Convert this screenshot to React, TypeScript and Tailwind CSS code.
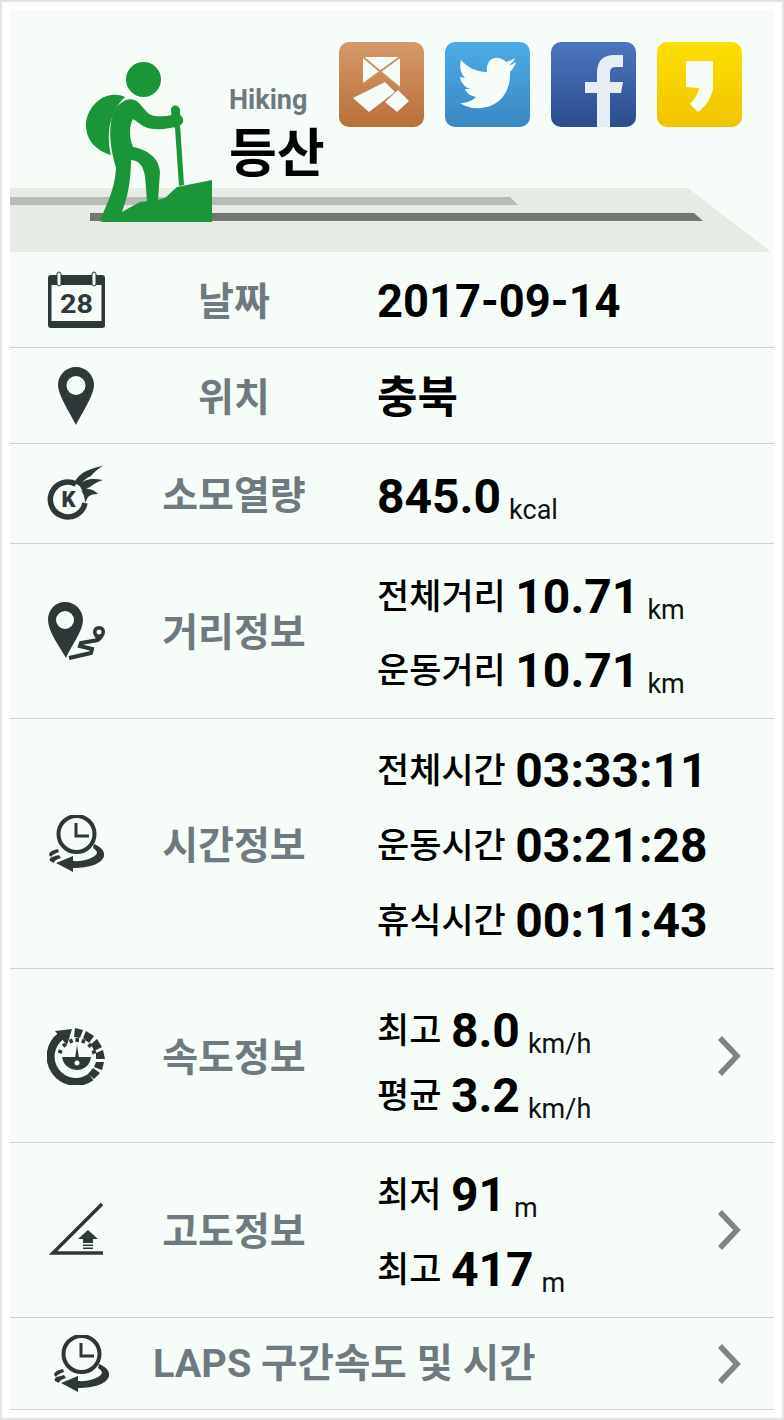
import type { ReactNode } from "react";

const ink = "#2f3838";
const paper = "#f6fcf7";
const green = "#1a9639";

function Hiker() {
  return (
    <svg viewBox="85 62 128 161" className="absolute left-[75px] top-[52px] h-[161px] w-[128px]">
      <circle cx="143.5" cy="79.5" r="17.5" fill={green} />
      <path d="M125 97 C110 90 90 100 86 122 C85 138 94 150 111 155 C107 138 107 114 125 97Z" fill={green} />
      <path
        d="M126 100 C131 98 136 100 139 103 L146 111 C150 116 156 118 172 115 L177 113 C181 114 184 119 183 122 C181 126 178 127 170 128 C160 130 150 130 143 126 L133 119 C129 126 129 138 133 147 C148 150 159 158 160 172 L158 201 L147 201 L145 176 C143 166 140 161 131 160 C131 178 128 198 121 214 L100 221 C106 205 115 190 116 168 C111 150 109 138 111 122 C112 112 117 104 126 100Z"
        fill={green}
      />
      <path d="M171 110 C171 104 179 104 180 110 L180 124 L184 185 L179 186 L175 128 L172 124Z" fill={green} />
      <path d="M212 180 L212 222 L100 222 L120 213 L140 202 L157 200 L165 198 L177 187Z" fill={green} />
    </svg>
  );
}

function Band() {
  return (
    <svg viewBox="10 188 764 64" className="absolute bottom-0 left-0 h-[64px] w-[764px]">
      <path d="M10 188 L688 188 L771 252 L10 252Z" fill="#e6ebe6" />
      <path d="M10 197 L510 197 L518 205 L10 205Z" fill="#b7bcb7" />
      <path d="M90 213 L694 213 L703 221 L90 221Z" fill="#727772" />
    </svg>
  );
}

function SocialTile({ className, children }: { className: string; children: ReactNode }) {
  return <div className={`h-[85px] w-[85px] overflow-hidden rounded-[10px] ${className}`}>{children}</div>;
}

function SocialIcons() {
  return (
    <div className="flex gap-[21px]">
      <SocialTile className="bg-linear-to-b from-[#d59a6a] to-[#b86f38]">
        <svg viewBox="0 0 85 85" className="h-full w-full">
          <path d="M24 15 L61 15 L61 45 L41 30 L24 42Z" fill={paper} />
          <path d="M24 15 L61 46 M61 15 L24 42" stroke="#cd9263" strokeWidth="2" fill="none" />
          <path d="M14 56 L46 40 L56 50 L30 70Z" fill={paper} />
          <path d="M46 60 L59 48 L70 59 L58 70Z" fill={paper} />
        </svg>
      </SocialTile>
      <SocialTile className="bg-linear-to-b from-[#4dabe6] to-[#3a88c2]">
        <svg viewBox="0 0 85 85" className="h-full w-full">
          <path
            d="M71 20 C68 22 66 23 64 23 C67 21 69 19 70 16 C67 18 64 19 61 20 C58 17 54 15 50 16 C44 17 41 23 42 30 C31 30 22 25 16 18 C14 26 16 32 20 36 C18 36 17 35 15 35 C16 41 20 45 25 47 C23 47 21 47 20 47 C22 52 26 54 31 55 C27 59 21 61 15 61 C21 65 28 67 36 66 C54 65 66 50 65 30 C67 28 70 24 71 20Z"
            fill={paper}
          />
        </svg>
      </SocialTile>
      <SocialTile className="bg-linear-to-b from-[#4d76bf] to-[#2b4c8c]">
        <svg viewBox="0 0 85 85" className="h-full w-full">
          <path
            d="M46 85 L46 51 L34 51 L34 40 L46 40 L46 31 C46 19 52 13 63 13 L72 13 L72 25 L66 25 C61 25 59 26 59 31 L59 40 L72 40 L70 51 L59 51 L59 85Z"
            fill="#e6edf5"
          />
        </svg>
      </SocialTile>
      <SocialTile className="bg-linear-to-b from-[#fce000] to-[#f0c400]">
        <svg viewBox="0 0 85 85" className="h-full w-full">
          <path d="M29 19 L56 19 L56 47 C54 57 48 65 41 70 L33 62 C37 58 41 52 42 46 L29 45Z" fill={paper} />
        </svg>
      </SocialTile>
    </div>
  );
}

function CalendarIcon() {
  return (
    <svg viewBox="0 0 58 58" className="h-[58px] w-[58px]">
      <rect x="1" y="4" width="57" height="53" rx="3" fill={ink} />
      <rect x="4.5" y="14" width="50" height="36" fill={paper} />
      <rect x="10" y="1" width="4" height="14" rx="2" fill={paper} stroke={ink} strokeWidth="1" />
      <rect x="45" y="1" width="4" height="14" rx="2" fill={paper} stroke={ink} strokeWidth="1" />
      <text
        x="13"
        y="42"
        textLength="33"
        lengthAdjust="spacingAndGlyphs"
        fontSize="25"
        fontWeight="700"
        fill={ink}
        fontFamily="Roboto, sans-serif"
      >
        28
      </text>
    </svg>
  );
}

function PinIcon() {
  return (
    <svg viewBox="0 0 36 58" className="h-[58px] w-[36px]">
      <path
        fillRule="evenodd"
        d="M18 0 C8 0 0 8 0 18 C0 28 12 46 18 58 C24 46 36 28 36 18 C36 8 28 0 18 0Z M18 9 A9.5 9.5 0 1 1 18 28 A9.5 9.5 0 1 1 18 9Z"
        fill={ink}
      />
    </svg>
  );
}

function KcalIcon() {
  return (
    <svg viewBox="0 0 58 58" className="h-[58px] w-[58px]">
      <path d="M29 19 A17.5 17.5 0 1 0 38 38" stroke={ink} strokeWidth="5.5" fill="none" />
      <text x="21.5" y="42" textAnchor="middle" fontSize="22" fontWeight="900" fill={ink} fontFamily="Roboto, sans-serif">
        K
      </text>
      <path d="M27 18 C33 6 44 4 56 0.5 C50 5 46 8 44 11 C40 13 36 15 33 21Z" fill={ink} />
      <path d="M32 20 C40 12 48 14 56 15 C50 17 46 19 43 22 C40 23 38 25 37 28Z" fill={ink} />
      <path d="M35 26 C42 22 47 25 51 29 C46 29 43 30 41 32 C40 34 39 36 38 38 C38 33 37 29 33 24Z" fill={ink} />
    </svg>
  );
}

function RouteIcon() {
  return (
    <svg viewBox="0 0 58 58" className="h-[58px] w-[58px]">
      <path
        fillRule="evenodd"
        d="M18 0 C8 0 1 8 1 18 C1 29 12 44 19 56 C24 44 36 29 36 18 C36 8 28 0 18 0Z M18 9 A9 9 0 1 1 18 27 A9 9 0 1 1 18 9Z"
        fill={ink}
      />
      <path d="M22 56 L44 51 L45 47 L33 44 L34 41 L51 38" stroke={ink} strokeWidth="4" fill="none" />
      <path
        fillRule="evenodd"
        d="M52 24 C48 24 46 27 46 30 C46 33 49 37 52 40 C55 37 58 33 58 30 C58 27 56 24 52 24Z M52 27.5 A2.5 2.5 0 1 1 52 32.5 A2.5 2.5 0 1 1 52 27.5Z"
        fill={ink}
      />
    </svg>
  );
}

function ClockIcon() {
  return (
    <svg viewBox="0 0 58 58" className="h-[58px] w-[58px]">
      <circle cx="29.5" cy="19" r="18" stroke={ink} strokeWidth="4" fill={paper} />
      <path d="M29 8 L29 21 L42 21" stroke={ink} strokeWidth="3" fill="none" />
      <path
        d="M47 29 C52 31 58 35 57 41 C55 49 42 53 26 53 L26 57 L9 48 L26 41 L26 46 C36 47 48 43 50 38 C50 36 48 34 46 33Z"
        fill={ink}
      />
      <path d="M2 40 C2 37 6 35 11 34 L12 37 C8 38 5 40 4 42Z M3 46 C2 44 3 43 5 42 L12 40 L14 43 C10 44 7 46 7 48Z" fill={ink} />
    </svg>
  );
}

function SpeedIcon() {
  const dots = [200, 225, 250, 270, 290, 315, 340];
  return (
    <svg viewBox="0 0 58 58" className="h-[58px] w-[58px]">
      <path d="M44 50 A25 25 0 1 1 14 9" stroke={ink} strokeWidth="8" fill="none" />
      <path d="M8 4 L25 2 L20 18Z" fill={ink} />
      <path
        d="M28 1 L36 3 L33 11 L27 10Z M39 4 L47 9 L42 16 L36 11Z M50 12 L55 20 L47 24 L44 17Z M56 23 L58 32 L49 32 L49 26Z M57 35 L55 43 L47 40 L49 35Z M53 46 L47 52 L41 47 L46 41Z"
        fill={ink}
      />
      <path d="M15 30 L44 30 C43 38 37 43 30 43 C23 43 16 38 15 30Z" fill={ink} />
      <path d="M30 18 L32 31 L28 31Z" fill={ink} />
      <circle cx="30" cy="36" r="2.5" fill={paper} />
      {dots.map((a) => (
        <rect key={a} x="28.5" y="11" width="3.5" height="4" fill={ink} transform={`rotate(${a - 270} 30 31)`} />
      ))}
    </svg>
  );
}

function SlopeIcon() {
  return (
    <svg viewBox="0 0 58 58" className="h-[58px] w-[58px]">
      <path d="M55 3 L6 52 L56 52" stroke={ink} strokeWidth="3.5" fill="none" />
      <path d="M41 29 L51 38 L46 38 L46 42 L36 42 L36 38 L31 38Z" fill={ink} />
      <rect x="36" y="43.5" width="10" height="1.5" fill={ink} />
      <rect x="36" y="46.5" width="10" height="1.5" fill={ink} />
    </svg>
  );
}

function Chevron() {
  return (
    <svg viewBox="0 0 24 40" className="ml-[15px] h-[40px] w-[24px]">
      <path d="M3 2 L20 20 L3 38" stroke="#808584" strokeWidth="5.5" fill="none" />
    </svg>
  );
}

function Unit({ children }: { children: ReactNode }) {
  return <span className="ml-[8px] translate-y-[6px] text-[27px] font-normal text-[#111]">{children}</span>;
}

function Stat({ name, value, unit, h }: { name: string; value: string; unit?: string; h: string }) {
  return (
    <div className={`flex items-baseline whitespace-nowrap pt-4 ${h}`}>
      <span className="mr-[9.5px] shrink-0 -translate-y-[4px] text-[35px] leading-none font-medium text-black">{name}</span>
      <span className="shrink-0 text-[48px] leading-none font-bold text-black">{value}</span>
      {unit && <Unit>{unit}</Unit>}
    </div>
  );
}

function Row({
  icon,
  label,
  h,
  arrow,
  children,
}: {
  icon: ReactNode;
  label: string;
  h: string;
  arrow?: boolean;
  children: ReactNode;
}) {
  return (
    <div className={`grid grid-cols-[132px_184px_1fr_72px] items-center border-b border-[#cfd3cf] ${h}`}>
      <div className="flex justify-center">{icon}</div>
      <div className="pt-[5px] text-center text-[39px] leading-none font-bold text-[#6e7a80]">{label}</div>
      <div className="pl-[51px]">{children}</div>
      <div>{arrow && <Chevron />}</div>
    </div>
  );
}

export default function App() {
  return (
    <div className="h-[1420px] w-[784px] border-2 border-[#e2e2e2] bg-white p-2 font-['Roboto','Noto_Sans_CJK_KR',sans-serif]">
      <div className="bg-[#f6fcf7]">
        <header className="relative h-[242px]">
          <Band />
          <Hiker />
          <div className="relative flex justify-end pt-[32px] pr-[32px]">
            <SocialIcons />
          </div>
          <div className="absolute top-[72px] left-[219px]">
            <div className="text-[27px] leading-[36px] font-bold text-[#6e7a80]">Hiking</div>
            <div className="text-[52px] leading-[74px] font-bold text-black">등산</div>
          </div>
        </header>

        <Row icon={<CalendarIcon />} label="날짜" h="h-[96px]">
          <div className="pt-[4px] text-[45.3px] leading-none font-bold text-black">2017-09-14</div>
        </Row>
        <Row icon={<PinIcon />} label="위치" h="h-[96px]">
          <div className="pt-[4px] text-[44px] leading-none font-bold text-black">충북</div>
        </Row>
        <Row icon={<KcalIcon />} label="소모열량" h="h-[100px]">
          <div className="flex items-baseline pt-[10px]">
            <span className="text-[48px] leading-none font-bold text-black">845.0</span>
            <Unit>kcal</Unit>
          </div>
        </Row>
        <Row icon={<RouteIcon />} label="거리정보" h="h-[175px]">
          <Stat name="전체거리" value="10.71" unit="km" h="h-[74px]" />
          <Stat name="운동거리" value="10.71" unit="km" h="h-[74px]" />
        </Row>
        <Row icon={<ClockIcon />} label="시간정보" h="h-[250px]">
          <Stat name="전체시간" value="03:33:11" h="h-[75px]" />
          <Stat name="운동시간" value="03:21:28" h="h-[75px]" />
          <Stat name="휴식시간" value="00:11:43" h="h-[75px]" />
        </Row>
        <Row icon={<SpeedIcon />} label="속도정보" h="h-[174px]" arrow>
          <Stat name="최고" value="8.0" unit="km/h" h="h-[65px]" />
          <Stat name="평균" value="3.2" unit="km/h" h="h-[65px]" />
        </Row>
        <Row icon={<SlopeIcon />} label="고도정보" h="h-[175px]" arrow>
          <Stat name="최저" value="91" unit="m" h="h-[75px]" />
          <Stat name="최고" value="417" unit="m" h="h-[75px]" />
        </Row>
        <div className="grid h-[92px] grid-cols-[132px_1fr_72px] items-center border-b border-[#cfd3cf]">
          <div className="flex justify-center pl-[9px]">
            <ClockIcon />
          </div>
          <div className="pl-[11px] text-[39.6px] leading-none font-bold text-[#6e7a80]">LAPS 구간속도 및 시간</div>
          <Chevron />
        </div>
      </div>
    </div>
  );
}
